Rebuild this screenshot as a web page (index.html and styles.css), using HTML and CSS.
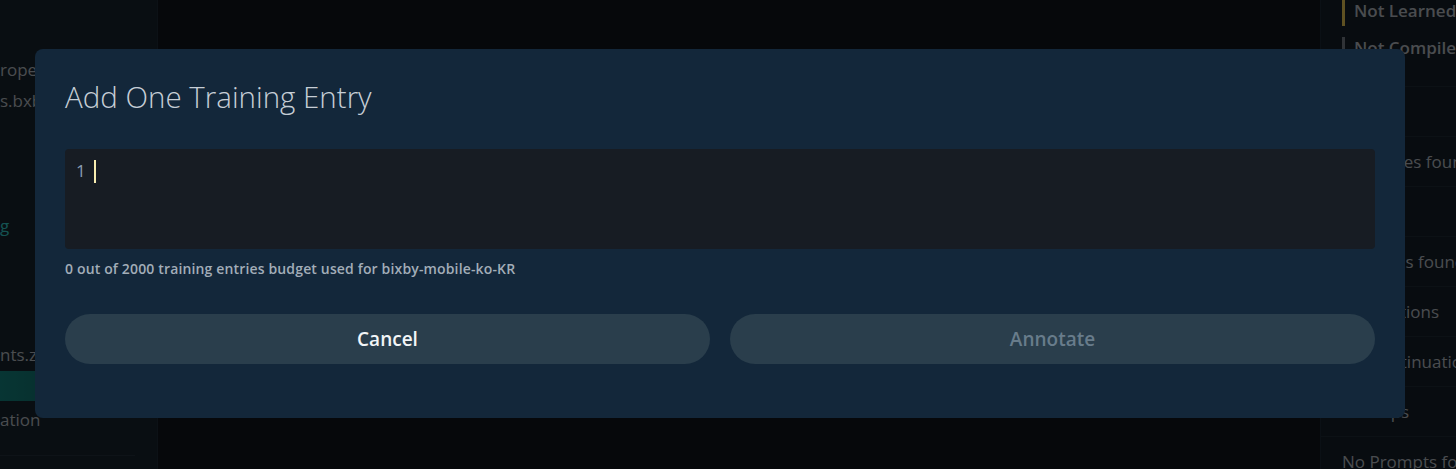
FILE: index.html
```html
<!DOCTYPE html>
<html lang="en">
<head>
    <meta charset="UTF-8" />
    <meta name="viewport" content="width=device-width, initial-scale=1.0" />
    <title>Training</title>
    <link rel="stylesheet" href="styles.css">
</head>
<body>
<div class="app">
    <aside class="sidebar">
        <div class="side-item side-top">rope</div>
        <div class="side-item">s.bxb</div>
        <div class="side-item side-active-text">g</div>
        <div class="side-item side-files">nts.z</div>
        <div class="side-band"></div>
        <div class="side-item">ation</div>
        <div class="side-rule"></div>
    </aside>

    <main class="main"></main>

    <section class="panel">
        <div class="status learned">Not Learned</div>
        <div class="status compiled">Not Compiled</div>
        <div class="panel-row">Types</div>
        <div class="panel-row">No Values found</div>
        <div class="panel-row">Roles</div>
        <div class="panel-row">No Items found</div>
        <div class="panel-row">Translations</div>
        <div class="panel-row">No Continuation</div>
        <div class="panel-row">Lookups</div>
        <div class="panel-row">No Prompts found</div>
    </section>
</div>

<div class="overlay">
    <div class="dialog">
        <h2 class="dialog-title">Add One Training Entry</h2>
        <div class="editor">
            <span class="line-no">1</span>
            <span class="caret"></span>
        </div>
        <p class="budget">0 out of 2000 training entries budget used for bixby-mobile-ko-KR</p>
        <div class="actions">
            <button class="btn btn-cancel">Cancel</button>
            <button class="btn btn-annotate" disabled>Annotate</button>
        </div>
    </div>
</div>
</body>
</html>
```

FILE: styles.css
```css
body {
    margin: 0;
    font-family: "Open Sans", "Noto Sans", sans-serif;
    background-color: #0f141b;
    overflow: hidden;
}
.app {
    display: flex;
    height: 469px;
}
.sidebar {
    width: 157px;
    background-color: #16212b;
    border-right: 1px solid #1c2834;
    color: #a8adb3;
    font-size: 17px;
}
.side-item {
    height: 31px;
    line-height: 31px;
}
.side-top {
    margin-top: 54px;
}
.side-active-text {
    margin-top: 94px;
    color: #2fbcbc;
}
.side-files {
    margin-top: 98px;
}
.side-band {
    height: 30px;
    margin: 1px 0 3px;
    background: linear-gradient(90deg, #107a76, #14504f);
}
.side-rule {
    margin-top: 20px;
    width: 135px;
    border-top: 1px solid #202c37;
}
.main {
    flex: 1;
    background-color: #0f141a;
}
.panel {
    width: 135px;
    border-left: 1px solid #1a2530;
    background-color: #141d26;
    color: #a8aeb5;
    font-size: 17px;
    overflow: hidden;
}
.status {
    height: 26px;
    line-height: 22px;
    padding-left: 9px;
    margin-left: 21px;
    border-left: 3px solid #d9b84e;
    font-weight: 600;
    white-space: nowrap;
}
.compiled {
    margin-top: 11px;
    border-left-color: #6d757d;
}
.panel-row {
    height: 49px;
    line-height: 49px;
    padding-left: 21px;
    border-top: 1px solid #1c2731;
    white-space: nowrap;
}
.status.compiled + .panel-row {
    margin-top: 23px;
}
.overlay {
    position: fixed;
    inset: 0;
    background-color: rgba(0, 0, 0, 0.56);
    padding: 49px 51px 0 35px;
}
.dialog {
    background-color: #13273a;
    border-radius: 8px;
    padding: 30px 30px 54px;
}
.dialog-title {
    margin: 0;
    font-size: 29.5px;
    font-weight: 300;
    line-height: 36px;
    color: #c6ced6;
}
.editor {
    margin-top: 34px;
    height: 100px;
    background-color: #171c23;
    border-radius: 4px;
    display: flex;
    align-items: flex-start;
    padding: 10px 11px;
    box-sizing: border-box;
}
.line-no {
    font-size: 17px;
    line-height: 24px;
    color: #8a9db3;
    width: 18px;
}
.caret {
    width: 2px;
    height: 23px;
    margin-top: 1px;
    background-color: #f7ecb0;
}
.budget {
    margin: 11px 0 0;
    font-size: 14px;
    font-weight: 600;
    letter-spacing: 0.15px;
    line-height: 18px;
    color: #a2adb8;
}
.actions {
    display: flex;
    gap: 20px;
    margin-top: 36px;
}
.btn {
    flex: 1;
    height: 50px;
    border: none;
    border-radius: 25px;
    background-color: #2a3e4c;
    font-family: inherit;
    font-size: 19px;
    font-weight: 600;
    cursor: pointer;
}
.btn-cancel {
    color: #f2f5f7;
}
.btn-annotate {
    color: #687c8b;
    cursor: default;
}
```
